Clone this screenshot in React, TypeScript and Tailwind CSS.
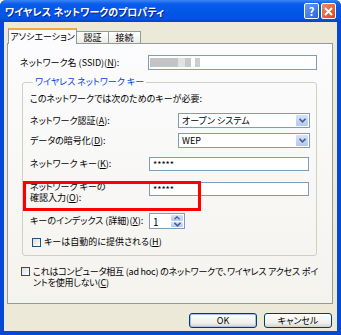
import React from 'react';

const jp = "font-['Noto_Sans_CJK_JP','Noto_Sans',sans-serif] [font-feature-settings:'palt']";

function Chevron() {
  return (
    <svg width="7" height="5" viewBox="0 0 7 5">
      <path d="M0.5 0.8 L3.5 3.8 L6.5 0.8" fill="none" stroke="#4D6185" strokeWidth="1.6" />
    </svg>
  );
}

function Select({ value }: { value: string }) {
  return (
    <div className="flex h-[15px] w-[132px] items-stretch border border-[#7F9DB9] bg-white">
      <div className="flex flex-1 items-center pl-[3px] text-[9px] text-black">{value}</div>
      <div className="m-[1px] flex w-[12px] items-center justify-center rounded-[1px] bg-[linear-gradient(to_bottom,#D6E2FD,#B4C8F6)]">
        <Chevron />
      </div>
    </div>
  );
}

function TextBox({ children, w }: { children?: React.ReactNode; w: string }) {
  return (
    <div className={`flex h-[14px] items-center border border-[#7F9DB9] bg-white pl-[3px] text-[9px] leading-none text-black ${w}`}>
      {children}
    </div>
  );
}

function CheckBox() {
  return <div className="h-[9px] w-[9px] shrink-0 border border-[#1C5180] bg-[linear-gradient(135deg,#DCDCD7,#FFFFFF)]" />;
}

function XpButton({ label, isDefault }: { label: string; isDefault?: boolean }) {
  return (
    <div
      className={`flex h-[15px] w-[68px] items-center justify-center rounded-[3px] border border-[#003C74] bg-[linear-gradient(to_bottom,#FFFFFF,#F0EFEA_70%,#D6D0C5)] text-[9px] text-black ${
        isDefault ? 'shadow-[inset_0_0_0_1px_#A6C3F0]' : ''
      }`}
    >
      {label}
    </div>
  );
}

export default function App() {
  return (
    <div className={`flex h-[335px] w-[341px] flex-col overflow-hidden rounded-t-[6px] bg-[#0348D8] ${jp}`}>
      {/* Title bar */}
      <div className="flex h-[22px] shrink-0 items-center bg-[linear-gradient(to_bottom,#3B85F5_0%,#0A5CEB_18%,#0157E6_50%,#0254E0_85%,#0143C8_100%)] pl-[5px] pr-[5px]">
        <span className="flex-1 text-[10px] font-bold text-white [text-shadow:1px_1px_0_#0A1E8C]">
          ワイヤレス ネットワークのプロパティ
        </span>
        <div className="flex gap-[2px]">
          <div className="flex h-[16px] w-[15px] items-center justify-center rounded-[2px] border border-white bg-[linear-gradient(135deg,#6B9BF5,#2663E0)] text-[11px] font-bold leading-none text-white">
            ?
          </div>
          <div className="flex h-[16px] w-[15px] items-center justify-center rounded-[2px] border border-white bg-[linear-gradient(135deg,#F08C66,#D9471E)]">
            <svg width="9" height="9" viewBox="0 0 9 9">
              <path d="M1 1 L8 8 M8 1 L1 8" stroke="white" strokeWidth="1.8" />
            </svg>
          </div>
        </div>
      </div>

      {/* Body */}
      <div className="mx-[4px] mb-[4px] flex flex-1 flex-col bg-[#ECE9D8] pt-[6px]">
        {/* Tabs */}
        <div className="flex h-[15px] items-end pl-[4px] text-[9px] text-black">
          <div className="relative z-10 -mb-[1px] flex h-[16px] w-[69px] items-center justify-center border-x border-[#919B9C] border-t-[2px] border-t-[#F3A93A] bg-[#FCFCFE]">
            アソシエーション
          </div>
          <div className="flex h-[12px] w-[32px] items-center justify-center border-r border-t border-[#919B9C] bg-[linear-gradient(to_bottom,#FFFFFF,#ECEBE6)]">
            認証
          </div>
          <div className="flex h-[12px] w-[32px] items-center justify-center border-r border-t border-[#919B9C] bg-[linear-gradient(to_bottom,#FFFFFF,#ECEBE6)]">
            接続
          </div>
        </div>

        {/* Panel */}
        <div className="ml-[3px] flex h-[261px] w-[326px] flex-col border border-[#919B9C] bg-[linear-gradient(to_bottom,#FCFCFE,#F4F3EE)] text-[9px] text-black">
          <div className="mt-[11px] flex h-[15px] items-center pl-[12px]">
            <span className="w-[128px]">
              ネットワーク名 (SSID)(<u>N</u>):
            </span>
            <div className="flex h-[15px] w-[169px] items-center border border-[#7F9DB9] bg-white pl-[1px]">
              <div className="h-[9px] w-[28px] bg-[#C4C4C4]" />
              <div className="h-[9px] w-[7px] bg-[#E2E2E2]" />
              <div className="h-[9px] w-[6px] bg-[#C8C8C8]" />
              <div className="h-[9px] w-[4px] bg-white" />
              <div className="h-[9px] w-[5px] bg-[#CDCDCD]" />
            </div>
          </div>

          <fieldset className="relative ml-[14px] mt-[6px] h-[180px] w-[295px] rounded-[3px] border border-[#D0D0BF] pl-[7px]">
            <legend className="ml-[3px] px-[2px] text-[9px] leading-[12px] text-[#0046D5]">ワイヤレス ネットワーク キー</legend>

            <div className="mt-[5px] flex h-[12px] items-center">このネットワークでは次のためのキーが必要:</div>

            <div className="mt-[8px] flex h-[15px] items-center">
              <span className="w-[148px]">
                ネットワーク認証(<u>A</u>):
              </span>
              <Select value="オープン システム" />
            </div>

            <div className="mt-[5px] flex h-[15px] items-center">
              <span className="w-[148px]">
                データの暗号化(<u>D</u>):
              </span>
              <Select value="WEP" />
            </div>

            <div className="mt-[9px] flex h-[14px] items-center">
              <span className="w-[119px]">
                ネットワーク キー(<u>K</u>):
              </span>
              <TextBox w="w-[160px]">*****</TextBox>
            </div>

            <div className="mt-[11px] flex h-[20px] items-start">
              <span className="-mt-[1px] flex w-[119px] flex-col leading-[11px]">
                <span>ネットワーク キーの</span>
                <span>
                  確認入力(<u>O</u>):
                </span>
              </span>
              <TextBox w="w-[160px]">*****</TextBox>
            </div>

            <div className="mt-[11px] flex h-[16px] items-center">
              <span className="w-[119px]">
                キーのインデックス (詳細)(<u>X</u>):
              </span>
              <div className="flex h-[16px] w-[36px] border border-[#7F9DB9] bg-white">
                <div className="flex flex-1 items-center pl-[3px] text-[10px]">1</div>
                <div className="m-[1px] flex w-[12px] flex-col gap-[1px]">
                  <div className="flex flex-1 items-center justify-center rounded-[1px] bg-[linear-gradient(to_bottom,#D6E2FD,#B4C8F6)]">
                    <svg width="6" height="4" viewBox="0 0 6 4">
                      <path d="M0.5 3.3 L3 0.8 L5.5 3.3" fill="none" stroke="#4D6185" strokeWidth="1.3" />
                    </svg>
                  </div>
                  <div className="flex flex-1 items-center justify-center rounded-[1px] bg-[linear-gradient(to_bottom,#D6E2FD,#B4C8F6)]">
                    <Chevron />
                  </div>
                </div>
              </div>
            </div>

            <div className="mt-[6px] flex h-[14px] items-center gap-[3px] pl-[2px]">
              <CheckBox />
              <span>
                キーは自動的に提供される(<u>H</u>)
              </span>
            </div>

            {/* red highlight */}
            <div className="absolute left-[0px] top-[93px] h-[30px] w-[178px] border-[3px] border-[#FF0000]" />
          </fieldset>

          <div className="mt-[10px] flex items-start gap-[3px] pl-[13px]">
            <div className="mt-[1px]">
              <CheckBox />
            </div>
            <span className="flex flex-col leading-[11px] tracking-[-0.2px]">
              <span>これはコンピュータ相互 (ad hoc) のネットワークで、ワイヤレス アクセス ポイ</span>
              <span>
                ントを使用しない(<u>C</u>)
              </span>
            </span>
          </div>
        </div>

        {/* Buttons */}
        <div className="mt-[9px] flex justify-end gap-[7px] pr-[5px]">
          <XpButton label="OK" isDefault />
          <XpButton label="キャンセル" />
        </div>
      </div>
    </div>
  );
}
